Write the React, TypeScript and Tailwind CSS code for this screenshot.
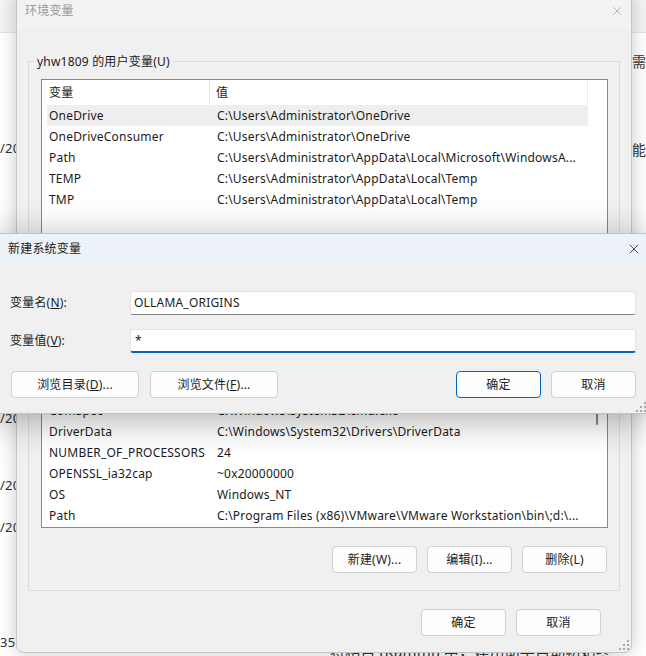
import { X } from "lucide-react";

type Row = { name: string; value: string };

const userVars: Row[] = [
  { name: "OneDrive", value: "C:\\Users\\Administrator\\OneDrive" },
  { name: "OneDriveConsumer", value: "C:\\Users\\Administrator\\OneDrive" },
  { name: "Path", value: "C:\\Users\\Administrator\\AppData\\Local\\Microsoft\\WindowsA..." },
  { name: "TEMP", value: "C:\\Users\\Administrator\\AppData\\Local\\Temp" },
  { name: "TMP", value: "C:\\Users\\Administrator\\AppData\\Local\\Temp" },
];

const systemVars: Row[] = [
  { name: "ChocolateyInstall", value: "C:\\ProgramData\\chocolatey" },
  { name: "ComSpec", value: "C:\\Windows\\system32\\cmd.exe" },
  { name: "DriverData", value: "C:\\Windows\\System32\\Drivers\\DriverData" },
  { name: "NUMBER_OF_PROCESSORS", value: "24" },
  { name: "OPENSSL_ia32cap", value: "~0x20000000" },
  { name: "OS", value: "Windows_NT" },
  { name: "Path", value: "C:\\Program Files (x86)\\VMware\\VMware Workstation\\bin\\;d:\\..." },
];

const Grip = () => (
  <svg width="10" height="10" viewBox="0 0 10 10" className="fill-[#a8a8a8]">
    <rect x="8" y="0" width="2" height="2" />
    <rect x="4" y="4" width="2" height="2" />
    <rect x="8" y="4" width="2" height="2" />
    <rect x="0" y="8" width="2" height="2" />
    <rect x="4" y="8" width="2" height="2" />
    <rect x="8" y="8" width="2" height="2" />
  </svg>
);

const Btn = ({ label, primary = false, wide = false }: { label: React.ReactNode; primary?: boolean; wide?: boolean }) => (
  <div
    className={`flex h-[27px] items-center justify-center rounded-[4px] border bg-[#fdfdfd] ${
      wide ? "w-[128px]" : "w-[85px]"
    } ${primary ? "border-[#0067c0]" : "border-[#d0d0d0]"}`}
  >
    {label}
  </div>
);

const VarList = ({
  rows,
  height,
  selected,
  fromBottom = false,
  thumb = false,
}: {
  rows: Row[];
  height: string;
  selected?: number;
  fromBottom?: boolean;
  thumb?: boolean;
}) => (
  <div className={`flex border border-[#828790] bg-white ${height}`}>
    <div className="flex w-[546px] flex-col">
      {/* header */}
      <div className="grid h-[25px] shrink-0 grid-cols-[168px_1fr] border-r border-[#ececec]">
        <div className="flex items-center border-r border-[#e5e5e5] pl-[7px]">变量</div>
        <div className="flex items-center pl-[6px]">值</div>
      </div>
      <div className={`flex flex-1 flex-col overflow-hidden ${fromBottom ? "justify-end pb-[1px]" : ""}`}>
        {rows.map((r, i) => (
          <div
            key={r.name + i}
            className={`ml-[5px] grid h-[21px] shrink-0 grid-cols-[163px_1fr] leading-[21px] ${
              selected === i ? "bg-[#eeeeee]" : ""
            }`}
          >
            <div className="overflow-hidden whitespace-nowrap pl-[2px]">{r.name}</div>
            <div className="overflow-hidden whitespace-nowrap pl-[7px]">{r.value}</div>
          </div>
        ))}
      </div>
    </div>
    <div className="w-[19px]">
      {thumb && <div className="ml-[8px] mt-[37px] h-[95px] w-[2px] rounded-full bg-[#8a8a8a]" />}
    </div>
  </div>
);

export default function App() {
  return (
    <div className="relative h-[656px] w-[646px] overflow-hidden bg-white font-['Noto_Sans','Noto_Sans_CJK_SC',sans-serif] text-[12px] tracking-[0.2px] text-[#1b1b1b]">
      {/* background page */}
      <div className="absolute left-0 top-0 h-[33px] w-full border-b border-[#e2e2e2] bg-[#f4f4f4]" />
      <span className="absolute left-0 top-[139px] text-[13px] text-[#333]">/20</span>
      <span className="absolute left-0 top-[409px] text-[13px] text-[#333]">/20</span>
      <span className="absolute left-0 top-[476px] text-[13px] text-[#333]">/20</span>
      <span className="absolute left-0 top-[518px] text-[13px] text-[#333]">/20</span>
      <span className="absolute left-0 top-[633px] text-[13px] text-[#333]">35</span>
      <span className="absolute left-[632px] top-[51px] whitespace-nowrap text-[14px] text-[#333]">需要</span>
      <span className="absolute left-[632px] top-[139px] whitespace-nowrap text-[14px] text-[#333]">能够</span>
      <span className="absolute left-[330px] top-[640px] whitespace-nowrap text-[15px] text-[#333]">
        将相目 (Rammi) 中，建川助手自动初始终
      </span>

      {/* 环境变量 */}
      <div className="absolute left-[16px] top-[-6px] flex h-[659px] w-[616px] flex-col rounded-b-[8px] border border-[#c6c6c6] bg-[#f0f0f0] shadow-[0_0_18px_rgba(0,0,0,0.22)]">
        <div className="flex h-[31px] shrink-0 items-center justify-between bg-[#f3f3f3] pl-[8px] pr-[7px] text-[#9a9a9a]">
          <span>环境变量</span>
          <X size={14} strokeWidth={1} className="text-[#8a8a8a]" />
        </div>
        <div className="flex flex-1 flex-col px-[11px] pt-[35px]">
          <div className="relative border border-[#dcdcdc] pb-[12px] pl-[12px] pr-[11px] pt-[17px]">
            <span className="absolute left-[5px] top-0 -translate-y-1/2 bg-[#f0f0f0] px-[3px] leading-[16px]">
              yhw1809 的用户变量(U)
            </span>
            <VarList rows={userVars} height="h-[162px]" selected={0} />
          </div>
          <div className="relative mt-[20px] border border-[#dcdcdc] pb-[17px] pl-[12px] pr-[11px] pt-[17px]">
            <span className="absolute left-[5px] top-0 -translate-y-1/2 bg-[#f0f0f0] px-[3px] leading-[16px]">
              系统变量(S)
            </span>
            <VarList rows={systemVars} height="h-[236px]" fromBottom thumb />
            <div className="mt-[18px] flex justify-end gap-[10px] pr-[1px]">
              <Btn label="新建(W)..." />
              <Btn label="编辑(I)..." />
              <Btn label="删除(L)" />
            </div>
          </div>
          <div className="mt-[18px] flex justify-end gap-[10px] pr-[19px]">
            <Btn label="确定" />
            <Btn label="取消" />
          </div>
        </div>
        <div className="absolute bottom-[2px] right-[2px]">
          <Grip />
        </div>
      </div>

      {/* 新建系统变量 */}
      <div className="absolute left-[-8px] top-[233px] w-[656px] border border-[#c2c2c2] bg-[#f0f0f0] shadow-[0_6px_34px_rgba(0,0,0,0.32)]">
        <div className="flex h-[30px] items-center justify-between bg-[#edf2f9] pl-[15px] pr-[5px]">
          <span>新建系统变量</span>
          <X size={16} strokeWidth={1.1} className="text-[#111]" />
        </div>
        <div className="flex flex-col pb-[15px]">
          <div className="mt-[27px] flex items-center pl-[17px] pr-[11px]">
            <span className="w-[120px]">
              变量名(<span className="underline">N</span>):
            </span>
            <div className="flex h-[24px] flex-1 items-center rounded-[3px] border border-[#e3e3e3] border-b-[#868686] bg-white pl-[3px]">
              OLLAMA_ORIGINS
            </div>
          </div>
          <div className="mt-[14px] flex items-center pl-[17px] pr-[11px]">
            <span className="w-[120px]">
              变量值(<span className="underline">V</span>):
            </span>
            <div className="flex h-[24px] flex-1 items-center rounded-[3px] border border-[#e3e3e3] border-b-2 border-b-[#0067c0] bg-white pl-[4px]">
              *
            </div>
          </div>
          <div className="mt-[18px] flex items-center pl-[18px] pr-[11px]">
            <div className="flex gap-[11px]">
              <Btn wide label={<span>浏览目录(<span className="underline">D</span>)...</span>} />
              <Btn wide label={<span>浏览文件(<span className="underline">F</span>)...</span>} />
            </div>
            <div className="ml-auto flex gap-[10px]">
              <Btn primary label="确定" />
              <Btn label="取消" />
            </div>
          </div>
        </div>
        <div className="absolute bottom-[1px] right-[1px]">
          <Grip />
        </div>
      </div>
    </div>
  );
}
